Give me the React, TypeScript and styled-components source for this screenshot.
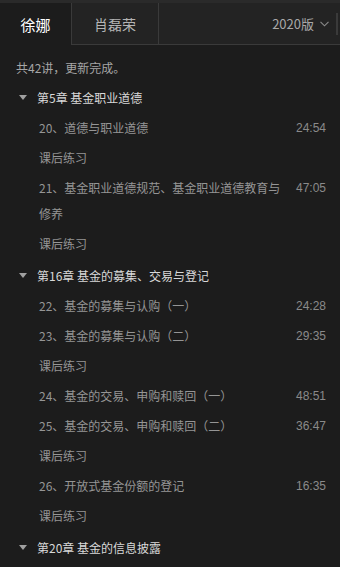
import React from 'react';
import styled, { createGlobalStyle } from 'styled-components';

const GlobalStyle = createGlobalStyle`
  html, body {
    margin: 0;
    padding: 0;
    background: #1c1c1c;
  }
  body {
    font-family: 'Noto Sans CJK SC', 'Noto Sans', 'Liberation Sans', sans-serif;
    overflow: hidden;
  }
`;

const Wrapper = styled.div`
  width: 340px;
  height: 567px;
  background: #1c1c1c;
  border-top: 3px solid #2a2a2a;
  box-sizing: border-box;
  overflow: hidden;
`;

const TabBar = styled.div`
  display: flex;
  height: 42px;
`;

const Tab = styled.div<{ active?: boolean; w: number; size: number }>`
  width: ${(p) => p.w}px;
  flex-shrink: 0;
  display: flex;
  align-items: center;
  justify-content: center;
  box-sizing: border-box;
  font-size: ${(p) => p.size}px;
  color: ${(p) => (p.active ? '#ffffff' : '#b4b4b4')};
  background: ${(p) => (p.active ? '#1c1c1c' : '#232323')};
  border-left: ${(p) => (p.active ? 'none' : '1px solid #3a3a3a')};
  border-bottom: ${(p) => (p.active ? 'none' : '1px solid #3a3a3a')};
`;

const EditionBox = styled.div`
  flex: 1;
  display: flex;
  align-items: center;
  justify-content: flex-end;
  gap: 6px;
  padding-right: 2px;
  background: #232323;
  border-left: 1px solid #3a3a3a;
  border-bottom: 1px solid #3a3a3a;
  font-size: 13px;
  color: #a8a8a8;
`;

const ScrollMark = styled.div`
  width: 2px;
  height: 22px;
  background: #3a3a3a;
  margin-left: 1px;
`;

const Count = styled.div`
  margin: 13px 0 3px;
  padding-left: 16px;
  line-height: 20px;
  height: 20px;
  font-size: 12px;
  color: #a6a6a6;
`;

const Chapter = styled.div`
  display: flex;
  align-items: center;
  height: 32px;
  padding-left: 19px;
  font-size: 12px;
  color: #d8d8d8;
`;

const Caret = styled.span`
  width: 0;
  height: 0;
  border-left: 4px solid transparent;
  border-right: 4px solid transparent;
  border-top: 5px solid #a0a0a0;
  margin-right: 10px;
`;

const Row = styled.div`
  display: flex;
  justify-content: space-between;
  align-items: flex-start;
  padding: 2px 14px 2px 39px;
  font-size: 12px;
  line-height: 26px;
  color: #959595;
`;

const RowTitle = styled.span`
  flex: 1;
  min-width: 0;
  padding-right: 14px;
`;

const RowTime = styled.span`
  flex-shrink: 0;
  color: #8a8a8a;
  font-family: 'Liberation Sans', sans-serif;
`;

type Item = { title: string; time?: string };
type Section = { chapter: string; items: Item[] };

const sections: Section[] = [
  {
    chapter: '第5章 基金职业道德',
    items: [
      { title: '20、道德与职业道德', time: '24:54' },
      { title: '课后练习' },
      { title: '21、基金职业道德规范、基金职业道德教育与修养', time: '47:05' },
      { title: '课后练习' },
    ],
  },
  {
    chapter: '第16章 基金的募集、交易与登记',
    items: [
      { title: '22、基金的募集与认购（一）', time: '24:28' },
      { title: '23、基金的募集与认购（二）', time: '29:35' },
      { title: '课后练习' },
      { title: '24、基金的交易、申购和赎回（一）', time: '48:51' },
      { title: '25、基金的交易、申购和赎回（二）', time: '36:47' },
      { title: '课后练习' },
      { title: '26、开放式基金份额的登记', time: '16:35' },
      { title: '课后练习' },
    ],
  },
  { chapter: '第20章 基金的信息披露', items: [] },
];

const Chevron = () => (
  <svg width="9" height="6" viewBox="0 0 9 6" fill="none">
    <path d="M0.5 0.8 L4.5 4.8 L8.5 0.8" stroke="#8a8a8a" strokeWidth="1.1" />
  </svg>
);

export default function App() {
  return (
    <Wrapper>
      <GlobalStyle />
      <TabBar>
        <Tab active w={71} size={15}>
          徐娜
        </Tab>
        <Tab w={87} size={14}>
          肖磊荣
        </Tab>
        <EditionBox>
          <span>2020版</span>
          <Chevron />
          <ScrollMark />
        </EditionBox>
      </TabBar>
      <Count>共42讲，更新完成。</Count>
      {sections.map((s, i) => (
        <div key={i}>
          <Chapter>
            <Caret />
            {s.chapter}
          </Chapter>
          {s.items.map((it, j) => (
            <Row key={j}>
              <RowTitle>{it.title}</RowTitle>
              {it.time && <RowTime>{it.time}</RowTime>}
            </Row>
          ))}
        </div>
      ))}
    </Wrapper>
  );
}
